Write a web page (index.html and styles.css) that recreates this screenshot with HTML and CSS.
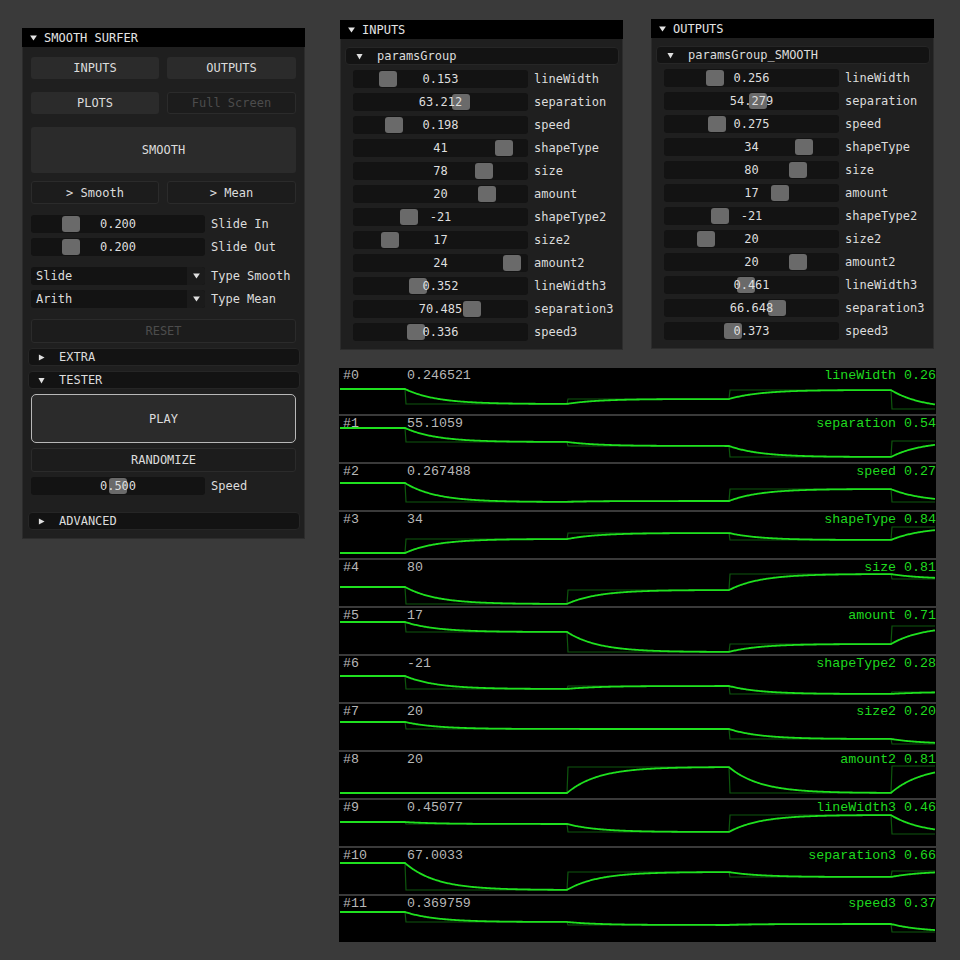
FILE: index.html
```html
<!DOCTYPE html>
<html>
<head>
<meta charset="utf-8">
<title>Smooth Surfer</title>
<link rel="stylesheet" href="styles.css">
</head>
<body>

<div class="win win-main">
  <div class="title"><svg class="tri-t" viewBox="0 0 8 7"><path d="M0 0.5H8L4 6.5Z"/></svg>SMOOTH SURFER</div>
  <div class="body">
    <div class="pair m10"><div class="btn">INPUTS</div><div class="btn">OUTPUTS</div></div>
    <div class="pair m13"><div class="btn">PLOTS</div><div class="btn btn-dark dis">Full Screen</div></div>
    <div class="btn btn-big m13">SMOOTH</div>
    <div class="pair m8"><div class="btn btn-dark h23">&gt; Smooth</div><div class="btn btn-dark h23">&gt; Mean</div></div>
    <div class="srow m11"><div class="slider s-main"><span class="grab" style="left:31px"></span><span class="sval">0.200</span></div><span class="slabel">Slide In</span></div>
    <div class="srow m5"><div class="slider s-main"><span class="grab" style="left:31px"></span><span class="sval">0.200</span></div><span class="slabel">Slide Out</span></div>
    <div class="srow m11"><div class="combo"><span class="ctext">Slide</span><span class="carrow"><svg viewBox="0 0 8 7"><path d="M0 0.5H8L4 6.5Z"/></svg></span></div><span class="slabel">Type Smooth</span></div>
    <div class="srow m5"><div class="combo"><span class="ctext">Arith</span><span class="carrow"><svg viewBox="0 0 8 7"><path d="M0 0.5H8L4 6.5Z"/></svg></span></div><span class="slabel">Type Mean</span></div>
    <div class="btn btn-dark dis h24 m11">RESET</div>
    <div class="chead chead-main m5"><svg class="tri-h" viewBox="0 0 8 8"><path d="M1 0.5V7.5L7.5 4Z"/></svg>EXTRA</div>
    <div class="chead chead-main m5"><svg class="tri-h" viewBox="0 0 8 8"><path d="M0.5 1H7.5L4 7.5Z"/></svg>TESTER</div>
    <div class="btn btn-play m5">PLAY</div>
    <div class="btn btn-dark h24 m5">RANDOMIZE</div>
    <div class="srow m5"><div class="slider s-main"><span class="grab" style="left:78px"></span><span class="sval">0.500</span></div><span class="slabel">Speed</span></div>
    <div class="chead chead-main m17"><svg class="tri-h" viewBox="0 0 8 8"><path d="M1 0.5V7.5L7.5 4Z"/></svg>ADVANCED</div>
  </div>
</div>

<div class="win win-in">
  <div class="title"><svg class="tri-t" viewBox="0 0 8 7"><path d="M0 0.5H8L4 6.5Z"/></svg>INPUTS</div>
  <div class="body body-params">
    <div class="chead chead-group"><svg class="tri-h" viewBox="0 0 8 8"><path d="M0.5 1H7.5L4 7.5Z"/></svg>paramsGroup</div>
    <div class="plist">
      <div class="srow"><div class="slider"><span class="grab" style="left:26px"></span><span class="sval">0.153</span></div><span class="slabel">lineWidth</span></div>
      <div class="srow"><div class="slider"><span class="grab" style="left:99px"></span><span class="sval">63.212</span></div><span class="slabel">separation</span></div>
      <div class="srow"><div class="slider"><span class="grab" style="left:32px"></span><span class="sval">0.198</span></div><span class="slabel">speed</span></div>
      <div class="srow"><div class="slider"><span class="grab" style="left:142px"></span><span class="sval">41</span></div><span class="slabel">shapeType</span></div>
      <div class="srow"><div class="slider"><span class="grab" style="left:122px"></span><span class="sval">78</span></div><span class="slabel">size</span></div>
      <div class="srow"><div class="slider"><span class="grab" style="left:125px"></span><span class="sval">20</span></div><span class="slabel">amount</span></div>
      <div class="srow"><div class="slider"><span class="grab" style="left:47px"></span><span class="sval">-21</span></div><span class="slabel">shapeType2</span></div>
      <div class="srow"><div class="slider"><span class="grab" style="left:28px"></span><span class="sval">17</span></div><span class="slabel">size2</span></div>
      <div class="srow"><div class="slider"><span class="grab" style="left:150px"></span><span class="sval">24</span></div><span class="slabel">amount2</span></div>
      <div class="srow"><div class="slider"><span class="grab" style="left:56px"></span><span class="sval">0.352</span></div><span class="slabel">lineWidth3</span></div>
      <div class="srow"><div class="slider"><span class="grab" style="left:110px"></span><span class="sval">70.485</span></div><span class="slabel">separation3</span></div>
      <div class="srow"><div class="slider"><span class="grab" style="left:54px"></span><span class="sval">0.336</span></div><span class="slabel">speed3</span></div>
    </div>
  </div>
</div>

<div class="win win-out">
  <div class="title"><svg class="tri-t" viewBox="0 0 8 7"><path d="M0 0.5H8L4 6.5Z"/></svg>OUTPUTS</div>
  <div class="body body-params">
    <div class="chead chead-group"><svg class="tri-h" viewBox="0 0 8 8"><path d="M0.5 1H7.5L4 7.5Z"/></svg>paramsGroup_SMOOTH</div>
    <div class="plist">
      <div class="srow"><div class="slider"><span class="grab" style="left:42px"></span><span class="sval">0.256</span></div><span class="slabel">lineWidth</span></div>
      <div class="srow"><div class="slider"><span class="grab" style="left:85px"></span><span class="sval">54.279</span></div><span class="slabel">separation</span></div>
      <div class="srow"><div class="slider"><span class="grab" style="left:44px"></span><span class="sval">0.275</span></div><span class="slabel">speed</span></div>
      <div class="srow"><div class="slider"><span class="grab" style="left:131px"></span><span class="sval">34</span></div><span class="slabel">shapeType</span></div>
      <div class="srow"><div class="slider"><span class="grab" style="left:125px"></span><span class="sval">80</span></div><span class="slabel">size</span></div>
      <div class="srow"><div class="slider"><span class="grab" style="left:107px"></span><span class="sval">17</span></div><span class="slabel">amount</span></div>
      <div class="srow"><div class="slider"><span class="grab" style="left:47px"></span><span class="sval">-21</span></div><span class="slabel">shapeType2</span></div>
      <div class="srow"><div class="slider"><span class="grab" style="left:33px"></span><span class="sval">20</span></div><span class="slabel">size2</span></div>
      <div class="srow"><div class="slider"><span class="grab" style="left:125px"></span><span class="sval">20</span></div><span class="slabel">amount2</span></div>
      <div class="srow"><div class="slider"><span class="grab" style="left:73px"></span><span class="sval">0.461</span></div><span class="slabel">lineWidth3</span></div>
      <div class="srow"><div class="slider"><span class="grab" style="left:104px"></span><span class="sval">66.648</span></div><span class="slabel">separation3</span></div>
      <div class="srow"><div class="slider"><span class="grab" style="left:60px"></span><span class="sval">0.373</span></div><span class="slabel">speed3</span></div>
    </div>
  </div>
</div>

<div class="plot">
  <div class="prow" data-levels="21 36 31 22 41"><svg class="curve" viewBox="0 0 597 46"><path class="step"/><polyline class="smooth"/></svg><span class="idx">#0</span><span class="val">0.246521</span><span class="name">lineWidth 0.26</span></div>
  <div class="prow" data-levels="12 26 30 41 25"><svg class="curve" viewBox="0 0 597 46"><path class="step"/><polyline class="smooth"/></svg><span class="idx">#1</span><span class="val">55.1059</span><span class="name">separation 0.54</span></div>
  <div class="prow" data-levels="19 38 37 25 38"><svg class="curve" viewBox="0 0 597 46"><path class="step"/><polyline class="smooth"/></svg><span class="idx">#2</span><span class="val">0.267488</span><span class="name">speed 0.27</span></div>
  <div class="prow" data-levels="41 27 21 28 15"><svg class="curve" viewBox="0 0 597 46"><path class="step"/><polyline class="smooth"/></svg><span class="idx">#3</span><span class="val">34</span><span class="name">shapeType 0.84</span></div>
  <div class="prow" data-levels="27 44 30 14 19"><svg class="curve" viewBox="0 0 597 46"><path class="step"/><polyline class="smooth"/></svg><span class="idx">#4</span><span class="val">80</span><span class="name">size 0.81</span></div>
  <div class="prow" data-levels="14 24 44 36 18"><svg class="curve" viewBox="0 0 597 46"><path class="step"/><polyline class="smooth"/></svg><span class="idx">#5</span><span class="val">17</span><span class="name">amount 0.71</span></div>
  <div class="prow" data-levels="20 33 30 38 36"><svg class="curve" viewBox="0 0 597 46"><path class="step"/><polyline class="smooth"/></svg><span class="idx">#6</span><span class="val">-21</span><span class="name">shapeType2 0.28</span></div>
  <div class="prow" data-levels="18 25 25 35 40"><svg class="curve" viewBox="0 0 597 46"><path class="step"/><polyline class="smooth"/></svg><span class="idx">#7</span><span class="val">20</span><span class="name">size2 0.20</span></div>
  <div class="prow" data-levels="41 41 15 41 14"><svg class="curve" viewBox="0 0 597 46"><path class="step"/><polyline class="smooth"/></svg><span class="idx">#8</span><span class="val">20</span><span class="name">amount2 0.81</span></div>
  <div class="prow" data-levels="22 24 32 15 34"><svg class="curve" viewBox="0 0 597 46"><path class="step"/><polyline class="smooth"/></svg><span class="idx">#9</span><span class="val">0.45077</span><span class="name">lineWidth3 0.46</span></div>
  <div class="prow" data-levels="15 42 24 29 23"><svg class="curve" viewBox="0 0 597 46"><path class="step"/><polyline class="smooth"/></svg><span class="idx">#10</span><span class="val">67.0033</span><span class="name">separation3 0.66</span></div>
  <div class="prow" data-levels="16 26 29 28 36"><svg class="curve" viewBox="0 0 597 46"><path class="step"/><polyline class="smooth"/></svg><span class="idx">#11</span><span class="val">0.369759</span><span class="name">speed3 0.37</span></div>
</div>

<script src="script.js"></script>
</body>
</html>
```

FILE: styles.css
```css
* { box-sizing: border-box; }
html, body { margin: 0; padding: 0; }
body {
  width: 960px;
  height: 960px;
  position: relative;
  overflow: hidden;
  background: #3a3a3a;
  font-family: "DejaVu Sans Mono", "Liberation Mono", monospace;
  font-size: 12px;
  color: #dcdcdc;
}

/* windows */
.win {
  position: absolute;
  background: #1f1f1f;
  border: 1px solid #2c2c2c;
}
.win-main { left: 22px; top: 28px; width: 283px; height: 511px; }
.win-in { left: 340px; top: 20px; width: 283px; height: 330px; }
.win-out { left: 651px; top: 19px; width: 283px; height: 330px; }

.title {
  height: 19px;
  margin: -1px -1px 0 -1px;
  background: #000;
  display: flex;
  align-items: center;
  padding-left: 8px;
  color: #e4e4e4;
  white-space: nowrap;
}
.tri-t { width: 7px; height: 6px; fill: #e4e4e4; margin-right: 7px; flex: none; }

.body { padding: 0 8px; display: flex; flex-direction: column; }
.body-params { padding: 8px 3px 0 4px; }

.m5 { margin-top: 5px; }
.m8 { margin-top: 8px; }
.m10 { margin-top: 10px; }
.m11 { margin-top: 11px; }
.m13 { margin-top: 13px; }
.m17 { margin-top: 17px; }

/* buttons */
.pair { display: grid; grid-template-columns: 128px 129px; gap: 8px; }
.btn {
  height: 22px;
  background: #2b2b2b;
  border-radius: 3px;
  display: flex;
  align-items: center;
  justify-content: center;
  color: #dcdcdc;
  white-space: nowrap;
}
.btn-dark { background: #1c1c1c; border: 1px solid #2b2b2b; }
.dis { color: #4c4c4c; }
.h23 { height: 23px; }
.h24 { height: 24px; }
.btn-big { height: 46px; }
.btn-play { height: 49px; border: 1px solid #b8b8b8; border-radius: 5px; }

/* slider rows */
.srow { display: flex; align-items: center; height: 18px; }
.slider {
  position: relative;
  width: 175px;
  height: 18px;
  background: #131313;
  border-radius: 3px;
  display: flex;
  align-items: center;
  justify-content: center;
  flex: none;
}
.s-main { width: 174px; }
.grab {
  position: absolute;
  top: 1px;
  width: 18px;
  height: 16px;
  background: #6a6a6a;
  border-radius: 3px;
}
.sval { position: relative; color: #dedede; }
.slabel { margin-left: 6px; white-space: nowrap; color: #dcdcdc; }

.combo {
  width: 174px;
  height: 18px;
  background: #131313;
  border-radius: 3px;
  display: flex;
  align-items: center;
  flex: none;
  overflow: hidden;
}
.ctext { flex: 1; padding-left: 5px; }
.carrow {
  width: 18px;
  height: 18px;
  background: #1b1b1b;
  display: flex;
  align-items: center;
  justify-content: center;
}
.carrow svg { width: 7px; height: 6px; fill: #e0e0e0; }

/* collapsing headers */
.chead {
  height: 18px;
  background: #131313;
  border: 1px solid #262626;
  border-radius: 4px;
  display: flex;
  align-items: center;
  white-space: nowrap;
  color: #dcdcdc;
}
.chead-main { margin-left: -3px; margin-right: -4px; padding-left: 9px; }
.chead-group { padding-left: 10px; }
.tri-h { width: 7px; height: 7px; fill: #e0e0e0; margin-right: 14px; flex: none; }

.plist {
  margin-top: 5px;
  padding-left: 8px;
  display: flex;
  flex-direction: column;
  gap: 5px;
}

/* plot */
.plot {
  position: absolute;
  left: 339px;
  top: 368px;
  width: 597px;
  display: flex;
  flex-direction: column;
  gap: 2px;
}
.prow {
  position: relative;
  height: 46px;
  background: #000;
  display: flex;
  align-items: flex-start;
  padding-left: 4px;
  font-family: "Liberation Mono", "DejaVu Sans Mono", monospace;
  font-size: 13.3px;
  line-height: 15px;
  overflow: hidden;
}
.curve { position: absolute; left: 0; top: 0; width: 597px; height: 46px; }
.step { fill: none; stroke: #0e560e; stroke-width: 1.2; }
.smooth { fill: none; stroke: #1fe01f; stroke-width: 1.8; }
.idx, .val, .name { position: relative; white-space: nowrap; }
.idx { width: 64px; color: #b8b8b8; }
.val { flex: 1; color: #b8b8b8; }
.name { color: #1fd91f; text-align: right; }
```

FILE: script.js
```js
(function () {
  var bx = [66, 228, 390, 552];
  var W = 597;
  var tau = 31;
  var rows = document.querySelectorAll('.prow');
  for (var r = 0; r < rows.length; r++) {
    var row = rows[r];
    var lv = row.getAttribute('data-levels').trim().split(/\s+/).map(Number);
    var step = 'M1 ' + lv[0];
    for (var i = 0; i < bx.length; i++) {
      step += ' H' + bx[i] + ' L' + (bx[i] + 1) + ' ' + lv[i + 1];
    }
    step += ' H' + (W - 1);
    var pts = [];
    var y = lv[0];
    for (var x = 1; x < W; x++) {
      var s = 0;
      while (s < bx.length && x > bx[s]) s++;
      var t = lv[s];
      y = t + (y - t) * Math.exp(-1 / tau);
      pts.push(x + ',' + y.toFixed(2));
    }
    row.querySelector('.step').setAttribute('d', step);
    row.querySelector('.smooth').setAttribute('points', pts.join(' '));
  }
})();
```
